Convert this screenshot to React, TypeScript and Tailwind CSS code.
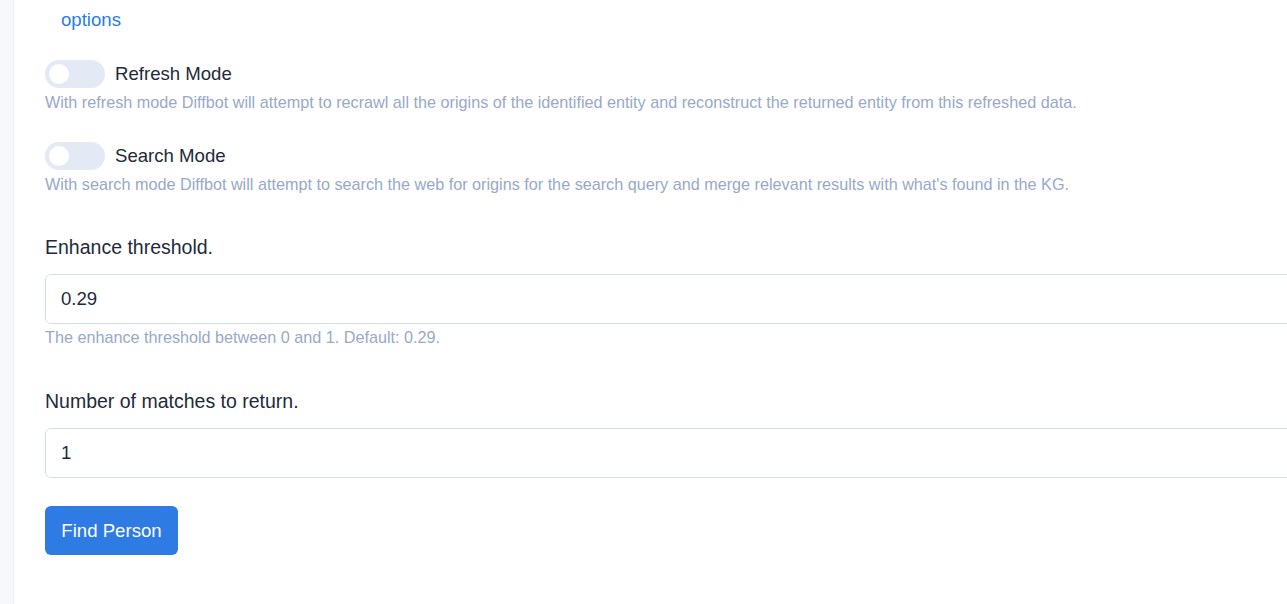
import React from 'react';

const Toggle = ({ label }: { label: string }) => (
  <div className="flex h-[28px] items-center">
    <div className="flex h-[28px] w-[60px] items-center rounded-full bg-[#e3eaf5] pl-[4px]">
      <div className="h-[20px] w-[20px] rounded-full bg-white" />
    </div>
    <span className="ml-[10px] text-[18.6px] leading-[24px] text-[#1e2a3b]">{label}</span>
  </div>
);

const Field = ({ label, value, help }: { label: string; value: string; help?: string }) => (
  <div>
    <div className="text-[19.5px] leading-[24px] text-[#1e2a3b]">{label}</div>
    <div className="mt-[15px] flex h-[50px] w-[1300px] items-center rounded-[6px] border border-[#d4deeb] bg-white px-[15px] text-[18.6px] text-[#1e2a3b]">
      {value}
    </div>
    {help && <div className="mt-[3px] text-[16.2px] leading-[20px] text-[#98a9c9]">{help}</div>}
  </div>
);

export default function App() {
  return (
    <div className="flex h-[604px] w-full overflow-hidden bg-white font-['Liberation_Sans',Arial,sans-serif]">
      <div className="w-[14px] shrink-0 border-r border-[#eaeff6] bg-[#f6f8fc]" />
      <div className="flex-1 pl-[31px]">
        <div className="pl-[16px] pt-[8px] text-[18.6px] leading-[24px] text-[#2b7de0]">options</div>

        <div className="mt-[28px]">
          <Toggle label="Refresh Mode" />
          <div className="mt-[4px] text-[16.2px] leading-[20px] text-[#98a9c9]">
            With refresh mode Diffbot will attempt to recrawl all the origins of the identified entity and reconstruct the returned entity from this refreshed data.
          </div>
        </div>

        <div className="mt-[30px]">
          <Toggle label="Search Mode" />
          <div className="mt-[4px] text-[16.2px] leading-[20px] text-[#98a9c9]">
            With search mode Diffbot will attempt to search the web for origins for the search query and merge relevant results with what's found in the KG.
          </div>
        </div>

        <div className="mt-[41px]">
          <Field
            label="Enhance threshold."
            value="0.29"
            help="The enhance threshold between 0 and 1. Default: 0.29."
          />
        </div>

        <div className="mt-[42px]">
          <Field label="Number of matches to return." value="1" />
        </div>

        <button className="mt-[28px] h-[49px] w-[133px] rounded-[6px] bg-[#2d7be3] text-[18.6px] text-white">
          Find Person
        </button>
      </div>
    </div>
  );
}
